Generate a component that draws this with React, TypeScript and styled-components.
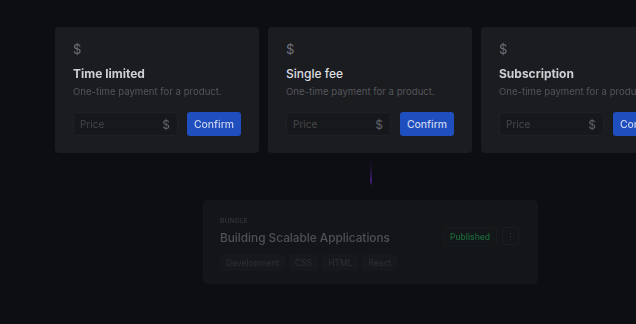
import styled, { createGlobalStyle } from "styled-components";

const GlobalStyle = createGlobalStyle`
  html, body {
    margin: 0;
    padding: 0;
    background: #0d0e11;
  }
  body {
    font-family: Inter, "Noto Sans", "Liberation Sans", sans-serif;
  }
`;

const CARDS = [
  { title: "Time limited", focused: false },
  { title: "Single fee", focused: true },
  { title: "Subscription", focused: false },
];

const TAGS = ["Development", "CSS", "HTML", "React"];

const App = () => {
  return (
    <Stage>
      <GlobalStyle />
      <CardRow>
        {CARDS.map((c) => (
          <PriceCard key={c.title} $focused={c.focused}>
            <Icon>$</Icon>
            <Title $focused={c.focused}>{c.title}</Title>
            <Subtitle>One-time payment for a product.</Subtitle>
            <InputRow>
              <PriceField>
                <span>Price</span>
                <Currency>$</Currency>
              </PriceField>
              <ConfirmButton>Confirm</ConfirmButton>
            </InputRow>
          </PriceCard>
        ))}
      </CardRow>
      <Lower>
        <Connector />
        <BundleCard>
          <BundleHead>
            <div>
              <Kicker>BUNDLE</Kicker>
              <BundleTitle>Building Scalable Applications</BundleTitle>
            </div>
            <Actions>
              <Badge>Published</Badge>
              <Kebab>⋮</Kebab>
            </Actions>
          </BundleHead>
          <Tags>
            {TAGS.map((t) => (
              <Tag key={t}>{t}</Tag>
            ))}
          </Tags>
        </BundleCard>
      </Lower>
    </Stage>
  );
};

export default App;

const Stage = styled.div`
  width: 636px;
  height: 324px;
  overflow: hidden;
  background: #0d0e11;
  display: flex;
  flex-direction: column;
`;

const CardRow = styled.div`
  display: flex;
  gap: 9px;
  padding-left: 55px;
  margin-top: 27px;
`;

const PriceCard = styled.div<{ $focused: boolean }>`
  flex-shrink: 0;
  width: 204px;
  height: 126px;
  box-sizing: border-box;
  padding: 14px 18px;
  background: #1b1c20;
  border-radius: 4px;
  display: flex;
  flex-direction: column;
  overflow: hidden;
  filter: ${(p) => (p.$focused ? "none" : "blur(0.7px)")};
`;

const Icon = styled.div`
  font-size: 13px;
  line-height: 16px;
  color: #6f717b;
`;

const Title = styled.div<{ $focused: boolean }>`
  margin-top: 8px;
  font-size: 12px;
  line-height: 18px;
  font-weight: ${(p) => (p.$focused ? 500 : 700)};
  color: ${(p) => (p.$focused ? "#dedfe2" : "#cfd0d3")};
`;

const Subtitle = styled.div`
  margin-top: 2px;
  font-size: 9.6px;
  line-height: 14px;
  color: #54555b;
  white-space: nowrap;
`;

const InputRow = styled.div`
  margin-top: 13px;
  display: flex;
  gap: 9px;
  height: 24px;
`;

const PriceField = styled.div`
  flex-shrink: 0;
  width: 105px;
  box-sizing: border-box;
  padding: 0 7px 0 6px;
  display: flex;
  align-items: center;
  justify-content: space-between;
  background: #17181b;
  border: 1px solid #1f2024;
  border-radius: 4px;
  font-size: 10px;
  color: #45464c;
`;

const Currency = styled.span`
  font-size: 12px;
  color: #62646b;
`;

const ConfirmButton = styled.div`
  flex-shrink: 0;
  width: 54px;
  display: flex;
  align-items: center;
  justify-content: center;
  background: #1f4ebf;
  border-radius: 3px;
  font-size: 10.4px;
  font-weight: 500;
  color: #c9d3ee;
`;

const Lower = styled.div`
  margin-left: 203px;
  width: 335px;
  display: flex;
  flex-direction: column;
  align-items: center;
`;

const Connector = styled.div`
  width: 2px;
  height: 47px;
  margin-left: 1px;
  background: linear-gradient(
    to bottom,
    rgba(110, 40, 210, 0) 12%,
    rgba(110, 40, 210, 0.15) 35%,
    rgba(120, 45, 225, 0.5) 60%,
    rgba(110, 40, 210, 0) 70%
  );
  filter: blur(0.4px);
`;

const BundleCard = styled.div`
  width: 335px;
  height: 84px;
  box-sizing: border-box;
  padding: 16px 19px 0 17px;
  background: #141518;
  border-radius: 5px;
  filter: blur(0.6px);
`;

const BundleHead = styled.div`
  display: flex;
  justify-content: space-between;
  align-items: flex-end;
`;

const Kicker = styled.div`
  font-size: 6.5px;
  line-height: 10px;
  letter-spacing: 0.3px;
  color: #3c3d42;
`;

const BundleTitle = styled.div`
  margin-top: 3px;
  font-size: 11.8px;
  line-height: 18px;
  font-weight: 500;
  color: #505157;
`;

const Actions = styled.div`
  display: flex;
  gap: 5px;
  margin-bottom: 0;
`;

const Badge = styled.div`
  height: 18px;
  padding: 0 6px;
  display: flex;
  align-items: center;
  background: #141719;
  border: 1px solid #181b1c;
  border-radius: 3px;
  font-size: 8.5px;
  font-weight: 500;
  color: #1b6a3a;
`;

const Kebab = styled.div`
  width: 17px;
  height: 18px;
  box-sizing: border-box;
  display: flex;
  align-items: center;
  justify-content: center;
  border: 1px solid #1b1c20;
  border-radius: 3px;
  font-size: 9px;
  color: #36373c;
`;

const Tags = styled.div`
  margin-top: 7px;
  display: flex;
  gap: 4px;
`;

const Tag = styled.div`
  height: 17px;
  padding: 0 6px;
  display: flex;
  align-items: center;
  background: #17181b;
  border-radius: 3px;
  font-size: 8.5px;
  color: #2f3034;
`;
